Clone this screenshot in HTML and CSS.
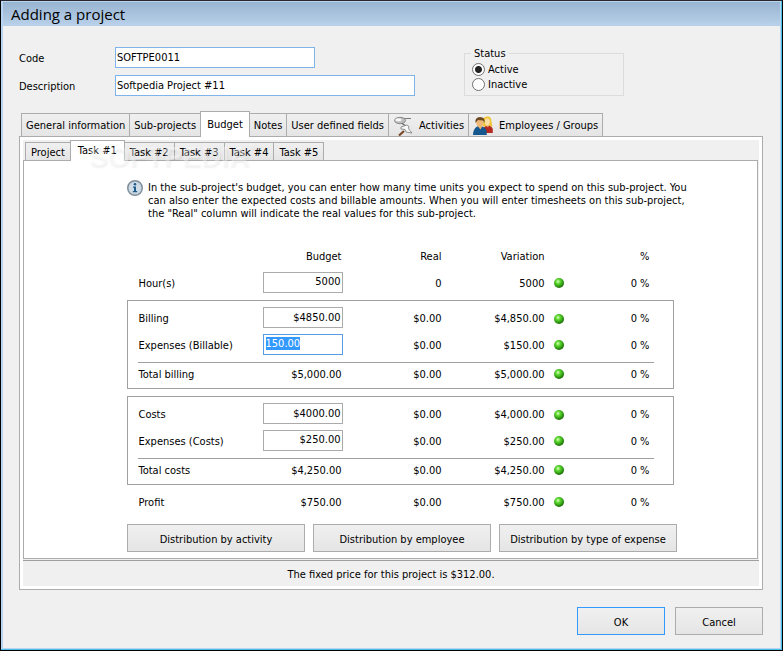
FILE: index.html
```html
<!DOCTYPE html>
<html lang="en">
<head>
    <meta charset="UTF-8">
    <meta name="viewport" content="width=device-width, initial-scale=1.0">
    <title>Adding a project</title>
    <link rel="stylesheet" href="styles.css">
</head>
<body>

    <svg class="defs" width="0" height="0" aria-hidden="true">
        <defs>
            <radialGradient id="green" cx="40%" cy="35%" r="65%">
                <stop offset="0" stop-color="#d8ffb8"/>
                <stop offset="0.35" stop-color="#5fd832"/>
                <stop offset="0.75" stop-color="#2f9a12"/>
                <stop offset="1" stop-color="#1c6a08"/>
            </radialGradient>
            <symbol id="dot" viewBox="0 0 10 10">
                <circle cx="5" cy="5" r="5" fill="url(#green)"/>
            </symbol>
        </defs>
    </svg>

    <div class="window">
        <h1 class="title">Adding a project</h1>

        <form class="dialog" id="project-form">
            <div class="top">
                <div class="fields">
                    <div class="field">
                        <label for="code">Code</label>
                        <input class="text code" type="text" id="code" value="SOFTPE0011">
                    </div>
                    <div class="field">
                        <label for="description">Description</label>
                        <input class="text description" type="text" id="description" value="Softpedia Project #11">
                    </div>
                </div>
                <fieldset class="status">
                    <legend>Status</legend>
                    <label><input type="radio" name="status" checked>Active</label>
                    <label><input type="radio" name="status">Inactive</label>
                </fieldset>
            </div>

            <div class="tabs">
                <button type="button" class="tab">General information</button>
                <button type="button" class="tab">Sub-projects</button>
                <button type="button" class="tab active">Budget</button>
                <button type="button" class="tab">Notes</button>
                <button type="button" class="tab">User defined fields</button>
                <button type="button" class="tab with-icon">
                    <svg width="20" height="20" viewBox="0 0 20 20">
                        <path d="M9 2.500H18" stroke="#777" stroke-width="1" fill="none"/>
                        <ellipse cx="7" cy="4.500" rx="5.500" ry="3.200" fill="#bdbdbd" stroke="#8b8b8b"/>
                        <ellipse cx="5.500" cy="3.800" rx="3" ry="1.500" fill="#f8f8f8"/>
                        <path d="M9 7.500l4 2.500" stroke="#666" stroke-width="1.200"/>
                        <path d="M8 11l6-2 1.500 1 .5 3.500 3 3.500-6-1-1-2.500-4-.5z" fill="#f8f8f8" stroke="#858585" stroke-width=".9"/>
                        <path d="M11 15 6 19.500" stroke="#79492e" stroke-width="2.200"/>
                    </svg>
                    Activities
                </button>
                <button type="button" class="tab with-icon">
                    <svg width="20" height="20" viewBox="0 0 20 20">
                        <path d="M10.500 2q2-2 5-1.500 3 .8 3 5l.8 5H10z" fill="#f0c431"/>
                        <path d="M10 17V12q2-2 5-2.500 4 .5 4.800 3.500v4z" fill="#b52a22"/>
                        <ellipse cx="14.300" cy="5.800" rx="2.600" ry="3.600" fill="#fbe0a6"/>
                        <path d="M13 9h3l-1 2.500z" fill="#f3c98c"/>
                        <path d="M0 19q0-6 4-8.500l4-.5q5 1.500 5.500 5l.3 4z" fill="#14588f"/>
                        <path d="M4.500 10h5l-2 3.500z" fill="#eab06e"/>
                        <ellipse cx="6.800" cy="6.500" rx="3.500" ry="4.300" fill="#eeb878"/>
                        <path d="M2.500 7Q1.500 1.500 7 1q5.500 0 4.500 6L10 4.500 5 4z" fill="#6b4a20"/>
                    </svg>
                    Employees / Groups
                </button>
            </div>

            <div class="page">
                <div class="tabs subtabs">
                    <button type="button" class="tab">Project</button>
                    <button type="button" class="tab active">Task #1</button>
                    <button type="button" class="tab">Task #2</button>
                    <button type="button" class="tab">Task #3</button>
                    <button type="button" class="tab">Task #4</button>
                    <button type="button" class="tab">Task #5</button>
                    <span class="watermark">SOFTPEDIA<sup>®</sup></span>
                </div>

                <div class="task">
                    <div class="info">
                        <svg width="16" height="16" viewBox="0 0 16 16">
                            <circle cx="8" cy="8" r="7.300" fill="#c3d0da" stroke="#7d8d99" stroke-width="1.400"/>
                            <circle cx="8" cy="8" r="5.800" fill="#d0dce6"/>
                            <circle cx="8" cy="4.300" r="1.300" fill="#1f5c8c"/>
                            <path d="M6 6.500h3v4.500h1.200v1.200H5.800V11H7V7.700H6z" fill="#1f5c8c"/>
                        </svg>
                        <p>In the sub-project's budget, you can enter how many time units you expect to spend on this sub-project. You<br>
                        can also enter the expected costs and billable amounts. When you will enter timesheets on this sub-project,<br>
                        the "Real" column will indicate the real values for this sub-project.</p>
                    </div>

                    <table class="budget">
                        <colgroup>
                            <col class="c-left"><col class="c-label"><col class="c-budget"><col class="c-real">
                            <col class="c-variation"><col class="c-dot"><col class="c-percent"><col class="c-right">
                        </colgroup>
                        <thead>
                            <tr><th></th><th></th><th>Budget</th><th>Real</th><th>Variation</th><th></th><th>%</th><th></th></tr>
                        </thead>
                        <tbody>
                            <tr class="hours">
                                <td></td><td><label for="hours">Hour(s)</label></td>
                                <td class="edit"><input class="amount" type="text" id="hours" value="5000"></td>
                                <td>0</td><td>5000</td>
                                <td class="dot"><svg width="10" height="10"><use href="#dot"/></svg></td>
                                <td>0 %</td><td></td>
                            </tr>
                        </tbody>
                        <tbody class="group">
                            <tr class="first">
                                <td></td><td><label for="billing">Billing</label></td>
                                <td class="edit"><input class="amount" type="text" id="billing" value="$4850.00"></td>
                                <td>$0.00</td><td>$4,850.00</td>
                                <td class="dot"><svg width="10" height="10"><use href="#dot"/></svg></td>
                                <td>0 %</td><td></td>
                            </tr>
                            <tr class="second">
                                <td></td><td><label for="expenses-billable">Expenses (Billable)</label></td>
                                <td class="edit"><input class="amount editing" type="text" id="expenses-billable" value="150.00"></td>
                                <td>$0.00</td><td>$150.00</td>
                                <td class="dot"><svg width="10" height="10"><use href="#dot"/></svg></td>
                                <td>0 %</td><td></td>
                            </tr>
                            <tr class="total">
                                <td></td><td>Total billing</td><td>$5,000.00</td><td>$0.00</td><td>$5,000.00</td>
                                <td class="dot"><svg width="10" height="10"><use href="#dot"/></svg></td>
                                <td>0 %</td><td></td>
                            </tr>
                        </tbody>
                        <tbody>
                            <tr class="space"><td colspan="8"></td></tr>
                        </tbody>
                        <tbody class="group">
                            <tr class="first">
                                <td></td><td><label for="costs">Costs</label></td>
                                <td class="edit"><input class="amount" type="text" id="costs" value="$4000.00"></td>
                                <td>$0.00</td><td>$4,000.00</td>
                                <td class="dot"><svg width="10" height="10"><use href="#dot"/></svg></td>
                                <td>0 %</td><td></td>
                            </tr>
                            <tr class="second">
                                <td></td><td><label for="expenses-costs">Expenses (Costs)</label></td>
                                <td class="edit"><input class="amount" type="text" id="expenses-costs" value="$250.00"></td>
                                <td>$0.00</td><td>$250.00</td>
                                <td class="dot"><svg width="10" height="10"><use href="#dot"/></svg></td>
                                <td>0 %</td><td></td>
                            </tr>
                            <tr class="total">
                                <td></td><td>Total costs</td><td>$4,250.00</td><td>$0.00</td><td>$4,250.00</td>
                                <td class="dot"><svg width="10" height="10"><use href="#dot"/></svg></td>
                                <td>0 %</td><td></td>
                            </tr>
                        </tbody>
                        <tbody>
                            <tr class="profit">
                                <td></td><td>Profit</td><td>$750.00</td><td>$0.00</td><td>$750.00</td>
                                <td class="dot"><svg width="10" height="10"><use href="#dot"/></svg></td>
                                <td>0 %</td><td></td>
                            </tr>
                        </tbody>
                    </table>

                    <div class="distribution">
                        <button type="button">Distribution by activity</button>
                        <button type="button">Distribution by employee</button>
                        <button type="button">Distribution by type of expense</button>
                    </div>
                </div>

                <p class="fixed-price">The fixed price for this project is $312.00.</p>
            </div>

            <div class="actions">
                <button type="submit" class="default">OK</button>
                <button type="button">Cancel</button>
            </div>
        </form>
    </div>

    <script>
        let expenses = document.getElementById('expenses-billable');
        expenses.focus();
        expenses.select();
    </script>

</body>
</html>
```
FILE: styles.css
```css
* {
    box-sizing: border-box;
}
body {
    margin: 0;
    background-color: #000;
    color: #000;
    font-family: "DejaVu Sans Condensed", "Noto Sans", sans-serif;
    font-size: 11px;
    line-height: 13px;
}
button, input {
    font: inherit;
    color: inherit;
}
p {
    margin: 0;
}
.defs {
    position: absolute;
}
.window {
    min-height: 100vh;
    border: 1px solid #000;
    border-top-color: #2b272c;
    background-color: #f0f0f0;
    box-shadow: inset -1px -1px 0 #45bfe8, inset 0 0 0 2px #b9d4f0;
    padding: 1px 2px;
}
.title {
    margin: 0;
    padding: 0 8px;
    height: 24px;
    line-height: 25px;
    font-family: "Open Sans", "Noto Sans", sans-serif;
    font-size: 15px;
    font-weight: normal;
    background: linear-gradient(#99b4d1, #b9d1ea);
}
.dialog {
    padding: 21px 17px 13px 16px;
}
.top {
    display: flex;
    gap: 49px;
}
.fields {
    display: flex;
    flex-direction: column;
    gap: 7px;
}
.field {
    display: flex;
    align-items: center;
}
.field label {
    width: 96px;
    padding-top: 2px;
}
.text {
    height: 21px;
    padding: 0 1px 1px;
    border: 1px solid #7eb4ea;
    background-color: #fff;
}
.code {
    width: 200px;
}
.description {
    width: 300px;
}
.status {
    width: 160px;
    height: 49px;
    margin: 0;
    padding: 2px 7px 0;
    border: 1px solid #dcdcdc;
}
.status legend {
    padding: 0 3px;
    margin-left: -1px;
}
.status label {
    display: flex;
    align-items: center;
    height: 15px;
    gap: 3px;
}
.status input {
    appearance: none;
    width: 13px;
    height: 13px;
    margin: 0;
    border: 1px solid #707070;
    border-radius: 50%;
    background-color: #fff;
}
.status input:checked {
    background-image: radial-gradient(circle, #222 3px, transparent 4px);
}

/* tabs */
.tabs {
    display: flex;
    align-items: flex-end;
    height: 25px;
    margin: 15px 2px 0;
}
.tab {
    display: flex;
    align-items: center;
    height: 23px;
    margin-right: -1px;
    padding: 1px 4px 0;
    border: 1px solid #acacac;
    border-bottom: 0;
    background: linear-gradient(#f0f0f0, #e5e5e5);
    white-space: nowrap;
}
.tab.active {
    position: relative;
    height: 26px;
    margin-bottom: -1px;
    padding: 0 6px 1px;
    background: #fff;
}
.with-icon {
    gap: 6px;
}
.page {
    border: 1px solid #acacac;
    background-color: #f0f0f0;
    box-shadow: inset 0 0 0 3px #fff;
    padding: 3px;
}
.subtabs {
    position: relative;
    height: 20px;
    margin: 0 2px;
}
.subtabs .tab {
    height: 18px;
    padding: 1px 5px 0;
}
.subtabs .tab.active {
    height: 21px;
    padding: 0 7px 2px;
}
.watermark {
    position: absolute;
    left: 64px;
    top: 3px;
    color: rgba(255, 255, 255, 0.4);
    font-family: "Liberation Sans", Arial, sans-serif;
    font-size: 28px;
    font-weight: bold;
    line-height: 28px;
    text-shadow: 1px 2px 2px rgba(0, 0, 0, 0.06);
    pointer-events: none;
}
.watermark sup {
    font-size: 8px;
    line-height: 8px;
    vertical-align: top;
}
.task {
    margin-right: 1px;
    padding: 19px 80px 6px 103px;
    border: 1px solid #acacac;
    background-color: #fff;
}
.info {
    display: flex;
    gap: 5px;
    white-space: nowrap;
}
.info svg {
    flex: none;
}
.info p {
    padding-top: 1px;
}

/* budget table */
.budget {
    width: 546px;
    margin-top: 23px;
    border-collapse: collapse;
    table-layout: fixed;
}
.c-left { width: 10px; }
.c-label { width: 125px; }
.c-budget { width: 80px; }
.c-real { width: 99px; }
.c-variation { width: 103px; }
.c-dot { width: 28px; }
.c-percent { width: 81px; }
.c-right { width: 20px; }
.budget th, .budget td {
    padding: 0;
    font-weight: normal;
    text-align: right;
}
.budget th:nth-child(3), .budget td:nth-child(3) {
    padding-right: 1px;
}
.budget th:nth-child(7), .budget td:nth-child(7) {
    padding-right: 4px;
}
.budget td:nth-child(2) {
    padding-left: 1px;
    text-align: left;
}
.budget td.dot {
    padding-left: 9px;
    text-align: left;
}
.dot svg {
    display: block;
}
.budget thead tr {
    height: 26px;
}
.hours {
    height: 31px;
}
.budget .hours td {
    padding-bottom: 2px;
}
.budget .hours td.edit {
    padding-bottom: 4px;
}
.group {
    border: 1px solid #a0a0a0;
}
.first {
    height: 32px;
}
.budget .first td {
    padding-top: 5px;
}
.budget .first td.edit {
    padding-top: 3px;
}
.second {
    height: 30px;
}
.budget .second td {
    padding-bottom: 3px;
}
.budget .second td.edit {
    padding-bottom: 5px;
}
.total {
    height: 26px;
}
.budget .total td {
    padding-bottom: 2px;
}
.total td:not(:first-child):not(:last-child) {
    border-top: 1px solid #a0a0a0;
}
.budget td.edit:nth-child(3) {
    padding-right: 0;
}
.space {
    height: 8px;
}
.profit {
    height: 36px;
}
.amount {
    display: block;
    width: 80px;
    height: 21px;
    padding: 0 1px 1px;
    border: 1px solid #ababab;
    background-color: #fff;
    text-align: right;
}
.amount.editing {
    padding-left: 2px;
    border-color: #569de5;
    outline: none;
    text-align: left;
}
.amount::selection {
    background-color: #3399ff;
    color: #fff;
}

/* buttons */
.distribution, .actions {
    display: flex;
    gap: 8px;
}
.distribution {
    margin-top: 4px;
}
.distribution button, .actions button {
    width: 178px;
    height: 28px;
    padding: 2px 0 0;
    border: 1px solid #acacac;
    background: linear-gradient(#f0f0f0, #e5e5e5);
}
.fixed-price {
    margin-top: 1px;
    padding: 7px 0 5px;
    border-top: 1px solid #a0a0a0;
    text-align: center;
}
.actions {
    justify-content: flex-end;
    gap: 10px;
    margin-top: 17px;
}
.actions button {
    width: 88px;
}
.actions .default {
    border-color: #3399ff;
}
```
